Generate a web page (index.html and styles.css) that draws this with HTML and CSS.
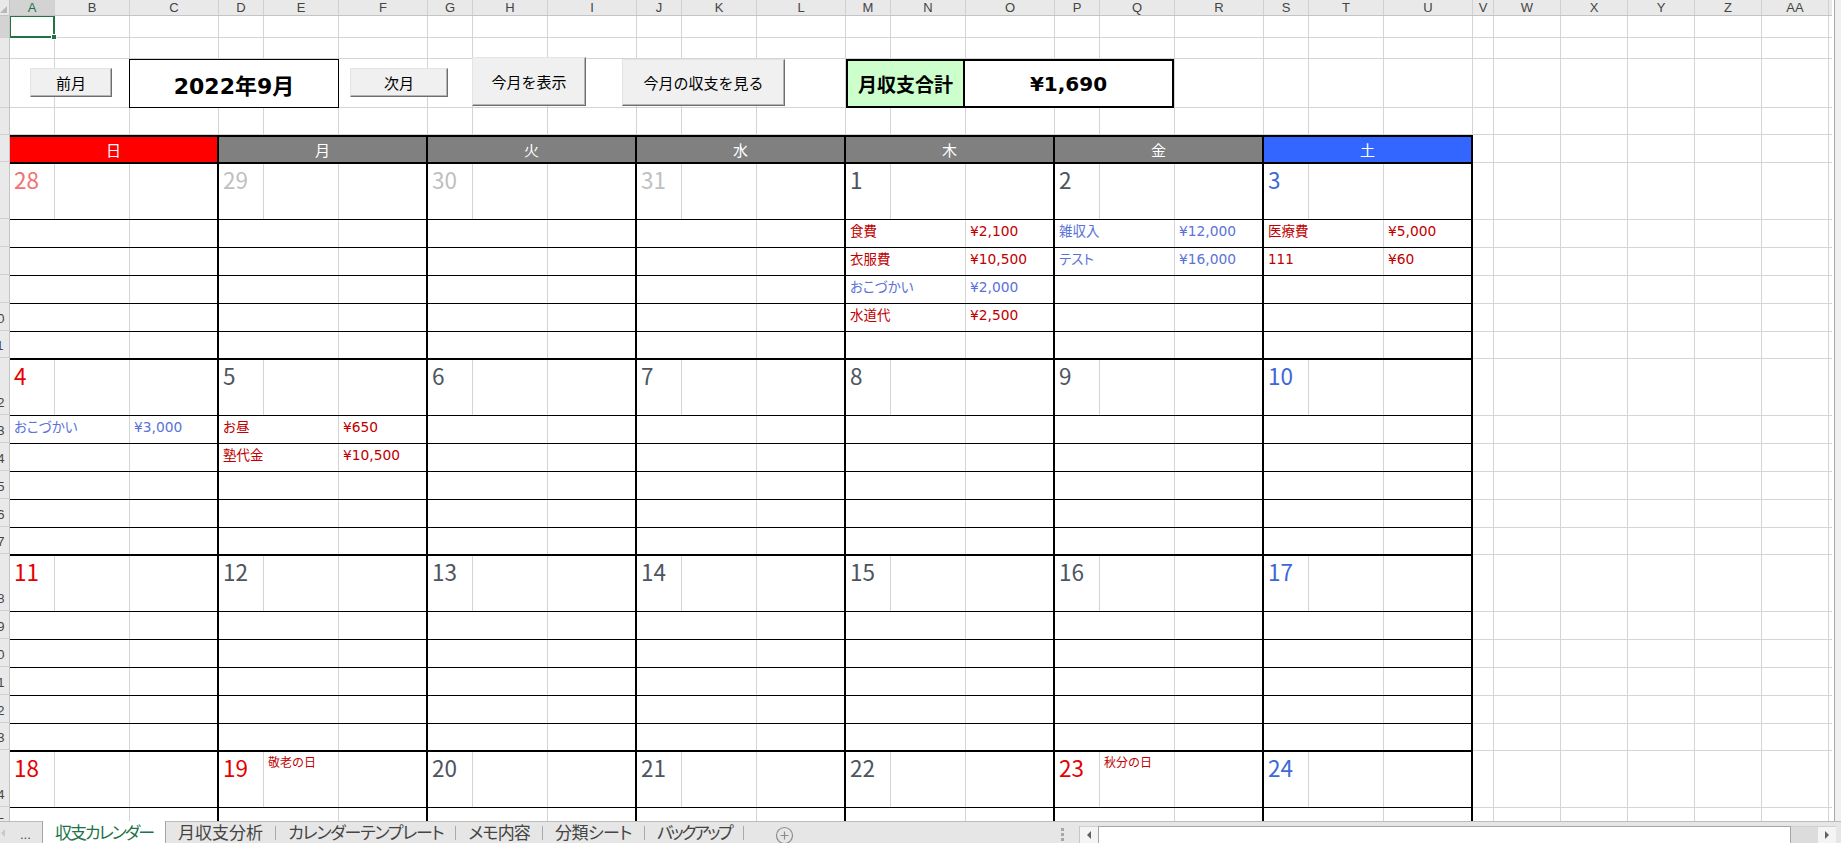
FILE: index.html
```html
<!DOCTYPE html>
<html lang="ja">
<head>
<meta charset="utf-8">
<title>収支カレンダー</title>
<link rel="stylesheet" href="styles.css">
</head>
<body>
<div class="app">
  <div class="workspace">
    <div class="sheet">
      <div class="colhdr">
        <div class="corner"><i class="tri"></i></div>
        <span class="ch ca sel">A</span><span class="ch cb">B</span><span class="ch cc">C</span>
        <span class="ch ca">D</span><span class="ch cb">E</span><span class="ch cc">F</span>
        <span class="ch ca">G</span><span class="ch cb">H</span><span class="ch cc">I</span>
        <span class="ch ca">J</span><span class="ch cb">K</span><span class="ch cc">L</span>
        <span class="ch ca">M</span><span class="ch cb">N</span><span class="ch cc">O</span>
        <span class="ch ca">P</span><span class="ch cb">Q</span><span class="ch cc">R</span>
        <span class="ch ca">S</span><span class="ch cb">T</span><span class="ch cc">U</span>
        <span class="ch cv">V</span><span class="ch cn">W</span><span class="ch cn">X</span><span class="ch cn">Y</span><span class="ch cn">Z</span><span class="ch cn">AA</span>
        <span class="ch crest"></span>
      </div>
      <div class="body">
        <div class="rowhdr">
          <div class="rh h22 sel"><span>1</span></div>
          <div class="rh h21"><span>2</span></div>
          <div class="rh h49"><span>3</span></div>
          <div class="rh h27"><span>4</span></div>
          <div class="rh h27"><span>5</span></div>
          <div class="rh h57"><span>6</span></div>
          <div class="rh h28"><span>7</span></div>
          <div class="rh h28"><span>8</span></div>
          <div class="rh h28"><span>9</span></div>
          <div class="rh h28"><span>10</span></div>
          <div class="rh h27"><span>11</span></div>
          <div class="rh h57"><span>12</span></div>
          <div class="rh h28"><span>13</span></div>
          <div class="rh h28"><span>14</span></div>
          <div class="rh h28"><span>15</span></div>
          <div class="rh h28"><span>16</span></div>
          <div class="rh h27"><span>17</span></div>
          <div class="rh h57"><span>18</span></div>
          <div class="rh h28"><span>19</span></div>
          <div class="rh h28"><span>20</span></div>
          <div class="rh h28"><span>21</span></div>
          <div class="rh h28"><span>22</span></div>
          <div class="rh h27"><span>23</span></div>
          <div class="rh h57"><span>24</span></div>
          <div class="rh h28"><span>25</span></div>
          <div class="rh h28"><span>26</span></div>
        </div>
        <div class="grid">
          <div class="band r22"></div>
          <div class="band r21"></div>
          <div class="band r49">
            <div class="datebox">2022年9月</div>
            <div class="total"><div class="tl">月収支合計</div><div class="tv">¥1,690</div></div>
          </div>
          <div class="band r27"></div>

          <div class="calhead">
            <div class="heads">
              <div class="dh sun">日</div><div class="dh">月</div><div class="dh">火</div><div class="dh">水</div><div class="dh">木</div><div class="dh">金</div><div class="dh sat">土</div>
            </div>
          </div>

          <div class="weekrow">
            <div class="week">
              <div class="day"><div class="dr"><span class="num psun">28</span></div>
                <div class="it"></div><div class="it"></div><div class="it"></div><div class="it"></div><div class="it"></div></div>
              <div class="day"><div class="dr"><span class="num prev">29</span></div>
                <div class="it"></div><div class="it"></div><div class="it"></div><div class="it"></div><div class="it"></div></div>
              <div class="day"><div class="dr"><span class="num prev">30</span></div>
                <div class="it"></div><div class="it"></div><div class="it"></div><div class="it"></div><div class="it"></div></div>
              <div class="day"><div class="dr"><span class="num prev">31</span></div>
                <div class="it"></div><div class="it"></div><div class="it"></div><div class="it"></div><div class="it"></div></div>
              <div class="day"><div class="dr"><span class="num">1</span></div>
                <div class="it"><span class="lb exp">食費</span><span class="am exp">¥2,100</span></div>
                <div class="it"><span class="lb exp">衣服費</span><span class="am exp">¥10,500</span></div>
                <div class="it"><span class="lb inc">おこづかい</span><span class="am inc">¥2,000</span></div>
                <div class="it"><span class="lb exp">水道代</span><span class="am exp">¥2,500</span></div>
                <div class="it"></div></div>
              <div class="day"><div class="dr"><span class="num">2</span></div>
                <div class="it"><span class="lb inc">雑収入</span><span class="am inc">¥12,000</span></div>
                <div class="it"><span class="lb inc">テスト</span><span class="am inc">¥16,000</span></div>
                <div class="it"></div><div class="it"></div><div class="it"></div></div>
              <div class="day"><div class="dr"><span class="num sat">3</span></div>
                <div class="it"><span class="lb exp">医療費</span><span class="am exp">¥5,000</span></div>
                <div class="it"><span class="lb exp">111</span><span class="am exp">¥60</span></div>
                <div class="it"></div><div class="it"></div><div class="it"></div></div>
            </div>
            <div class="restw"></div>
          </div>

          <div class="weekrow">
            <div class="week">
              <div class="day"><div class="dr"><span class="num sun">4</span></div>
                <div class="it"><span class="lb inc">おこづかい</span><span class="am inc">¥3,000</span></div>
                <div class="it"></div><div class="it"></div><div class="it"></div><div class="it"></div></div>
              <div class="day"><div class="dr"><span class="num">5</span></div>
                <div class="it"><span class="lb exp">お昼</span><span class="am exp">¥650</span></div>
                <div class="it"><span class="lb exp">塾代金</span><span class="am exp">¥10,500</span></div>
                <div class="it"></div><div class="it"></div><div class="it"></div></div>
              <div class="day"><div class="dr"><span class="num">6</span></div>
                <div class="it"></div><div class="it"></div><div class="it"></div><div class="it"></div><div class="it"></div></div>
              <div class="day"><div class="dr"><span class="num">7</span></div>
                <div class="it"></div><div class="it"></div><div class="it"></div><div class="it"></div><div class="it"></div></div>
              <div class="day"><div class="dr"><span class="num">8</span></div>
                <div class="it"></div><div class="it"></div><div class="it"></div><div class="it"></div><div class="it"></div></div>
              <div class="day"><div class="dr"><span class="num">9</span></div>
                <div class="it"></div><div class="it"></div><div class="it"></div><div class="it"></div><div class="it"></div></div>
              <div class="day"><div class="dr"><span class="num sat">10</span></div>
                <div class="it"></div><div class="it"></div><div class="it"></div><div class="it"></div><div class="it"></div></div>
            </div>
            <div class="restw"></div>
          </div>

          <div class="weekrow">
            <div class="week">
              <div class="day"><div class="dr"><span class="num sun">11</span></div>
                <div class="it"></div><div class="it"></div><div class="it"></div><div class="it"></div><div class="it"></div></div>
              <div class="day"><div class="dr"><span class="num">12</span></div>
                <div class="it"></div><div class="it"></div><div class="it"></div><div class="it"></div><div class="it"></div></div>
              <div class="day"><div class="dr"><span class="num">13</span></div>
                <div class="it"></div><div class="it"></div><div class="it"></div><div class="it"></div><div class="it"></div></div>
              <div class="day"><div class="dr"><span class="num">14</span></div>
                <div class="it"></div><div class="it"></div><div class="it"></div><div class="it"></div><div class="it"></div></div>
              <div class="day"><div class="dr"><span class="num">15</span></div>
                <div class="it"></div><div class="it"></div><div class="it"></div><div class="it"></div><div class="it"></div></div>
              <div class="day"><div class="dr"><span class="num">16</span></div>
                <div class="it"></div><div class="it"></div><div class="it"></div><div class="it"></div><div class="it"></div></div>
              <div class="day"><div class="dr"><span class="num sat">17</span></div>
                <div class="it"></div><div class="it"></div><div class="it"></div><div class="it"></div><div class="it"></div></div>
            </div>
            <div class="restw"></div>
          </div>

          <div class="weekrow">
            <div class="week">
              <div class="day"><div class="dr"><span class="num sun">18</span></div>
                <div class="it"></div><div class="it"></div><div class="it"></div><div class="it"></div><div class="it"></div></div>
              <div class="day"><div class="dr"><span class="num sun">19</span><span class="hol">敬老の日</span></div>
                <div class="it"></div><div class="it"></div><div class="it"></div><div class="it"></div><div class="it"></div></div>
              <div class="day"><div class="dr"><span class="num">20</span></div>
                <div class="it"></div><div class="it"></div><div class="it"></div><div class="it"></div><div class="it"></div></div>
              <div class="day"><div class="dr"><span class="num">21</span></div>
                <div class="it"></div><div class="it"></div><div class="it"></div><div class="it"></div><div class="it"></div></div>
              <div class="day"><div class="dr"><span class="num">22</span></div>
                <div class="it"></div><div class="it"></div><div class="it"></div><div class="it"></div><div class="it"></div></div>
              <div class="day"><div class="dr"><span class="num sun">23</span><span class="hol">秋分の日</span></div>
                <div class="it"></div><div class="it"></div><div class="it"></div><div class="it"></div><div class="it"></div></div>
              <div class="day"><div class="dr"><span class="num sat">24</span></div>
                <div class="it"></div><div class="it"></div><div class="it"></div><div class="it"></div><div class="it"></div></div>
            </div>
            <div class="restw"></div>
          </div>

          <div class="selcell"><i></i></div>
          <button class="btn b-prev" type="button">前月</button>
          <button class="btn b-next" type="button">次月</button>
          <button class="btn b-today" type="button">今月を表示</button>
          <button class="btn b-view" type="button">今月の収支を見る</button>
        </div>
      </div>
    </div>
    <div class="vscroll"></div>
  </div>

  <div class="tabbar">
    <div class="tabnav">
      <svg class="larr" width="6" height="10" viewBox="0 0 6 10"><path d="M5 1 L1 5 L5 9 Z" fill="#c8c8c8"/></svg>
      <span class="more">...</span>
    </div>
    <div class="tab active k2">収支カレンダー</div>
    <div class="tab">月収支分析</div><span class="sep"></span>
    <div class="tab k12">カレンダーテンプレート</div><span class="sep"></span>
    <div class="tab k09">メモ内容</div><span class="sep"></span>
    <div class="tab k05">分類シート</div><span class="sep"></span>
    <div class="tab k26">バックアップ</div><span class="sep"></span>
    <div class="addsheet">
      <svg width="19" height="19" viewBox="0 0 19 19"><circle cx="9.5" cy="9.5" r="8" fill="none" stroke="#8c8c8c" stroke-width="1.2"/><path d="M9.5 5.5 V13.5 M5.5 9.5 H13.5" stroke="#8c8c8c" stroke-width="1.2"/></svg>
    </div>
    <div class="tabfill"></div>
    <div class="grip"><i></i><i></i><i></i></div>
    <div class="hscroll">
      <div class="harr"><svg width="6" height="10" viewBox="0 0 6 10"><path d="M5 1 L1 5 L5 9 Z" fill="#606060"/></svg></div>
      <div class="thumb"></div>
      <div class="track"></div>
      <div class="harr"><svg width="6" height="10" viewBox="0 0 6 10"><path d="M1 1 L5 5 L1 9 Z" fill="#606060"/></svg></div>
    </div>
  </div>
</div>
</body>
</html>
```

FILE: styles.css
```css
* { box-sizing: border-box; margin: 0; padding: 0; }
html, body { width: 1841px; height: 843px; overflow: hidden; background: #fff; }
body { font-family: "Noto Sans CJK JP", "Noto Sans", sans-serif; color: #000; }

.app { display: flex; flex-direction: column; width: 1841px; height: 843px; }
.workspace { display: flex; height: 821px; flex: none; }
.sheet { flex: 1; display: flex; flex-direction: column; min-width: 0; overflow: hidden; }
.vscroll {
  width: 9px; flex: none;
  background: linear-gradient(to right, #fff 0 2px, #a9a9a9 2px 3px, #f0f0f0 3px);
}

/* column header */
.colhdr { display: flex; height: 16px; flex: none; background: #e9e9e9; border-bottom: 1px solid #c4c4c4; }
.corner { width: 10px; flex: none; position: relative; overflow: hidden; border-right: 1px solid #c4c4c4; }
.tri { position: absolute; left: 0; bottom: 2px; width: 0; height: 0; border-left: 7px solid transparent; border-bottom: 7px solid #b9b9b9; }
.ch {
  flex: none; height: 15px; border-right: 1px solid #d0d0d0;
  font: 13px/15px "Liberation Sans", Arial, sans-serif; color: #444; text-align: center;
}
.ch.sel { background: #d3d3d3; color: #217346; }
.ca { width: 45px; }
.cb { width: 75px; }
.cc { width: 89px; }
.cv { width: 21px; }
.cn { width: 67px; }
.crest { flex: 1; border-right: none; }

/* body */
.body { flex: 1; display: flex; min-height: 0; }
.rowhdr {
  width: 10px; flex: none; overflow: hidden; display: flex; flex-direction: column;
  background: #e9e9e9; border-right: 1px solid #c4c4c4;
}
.rh {
  flex: none; display: flex; align-items: flex-end; padding-bottom: 3px;
  border-bottom: 1px solid #d0d0d0;
  font: 13px/16px "Liberation Sans", Arial, sans-serif; color: #444; white-space: nowrap;
}
.rh span { margin-left: -10px; }
.rh.sel { background: #d3d3d3; }
.h21 { height: 21px; } .h22 { height: 22px; } .h27 { height: 27px; }
.h28 { height: 28px; } .h49 { height: 49px; } .h57 { height: 57px; }

.grid {
  flex: 1; position: relative; overflow: hidden; display: flex; flex-direction: column;
  background:
    linear-gradient(#d4d4d4, #d4d4d4) 1483px 0 / 1px 100% no-repeat,
    linear-gradient(#d4d4d4, #d4d4d4) 1550px 0 / 1px 100% no-repeat,
    linear-gradient(#d4d4d4, #d4d4d4) 1617px 0 / 1px 100% no-repeat,
    linear-gradient(#d4d4d4, #d4d4d4) 1684px 0 / 1px 100% no-repeat,
    linear-gradient(#d4d4d4, #d4d4d4) 1751px 0 / 1px 100% no-repeat,
    linear-gradient(#d4d4d4, #d4d4d4) 1818px 0 / 1px 100% no-repeat,
    linear-gradient(#fff, #fff) 1463px 0 / 600px 100% no-repeat,
    linear-gradient(to right, transparent 0 44px, #d4d4d4 44px 45px, transparent 45px 119px, #d4d4d4 119px 120px, transparent 120px 208px, #d4d4d4 208px 209px) 0 0 / 209px 100% repeat-x,
    #fff;
}

.band { flex: none; display: flex; align-items: flex-start; border-bottom: 1px solid #d4d4d4; }
.r22 { height: 22px; } .r21 { height: 21px; } .r49 { height: 49px; } .r27 { height: 27px; }

.datebox {
  flex: none; margin-left: 119px; width: 210px; height: 49px;
  border: 1px solid #000; background: #fff;
  display: flex; align-items: center; justify-content: center;
  font: 700 22px "DejaVu Sans", "Noto Sans CJK JP", sans-serif; color: #000;
}
.total {
  flex: none; margin-left: 507px; width: 328px; height: 49px;
  border: 2px solid #000; display: flex;
}
.tl {
  width: 117px; flex: none; background: #ccffcc; border-right: 2px solid #000;
  display: flex; align-items: center; justify-content: center;
  font: 700 19px "Noto Sans CJK JP", sans-serif;
}
.tv {
  flex: 1; background: #fff; display: flex; align-items: center; justify-content: center;
  font: 700 20px "DejaVu Sans", "Noto Sans CJK JP", sans-serif;
}

/* calendar */
.calhead { flex: none; height: 27px; display: flex; }
.heads { width: 1463px; flex: none; display: flex; border-top: 2px solid #000; }
.dh {
  width: 209px; flex: none; border-right: 2px solid #000; background: #808080; color: #fff;
  display: flex; align-items: center; justify-content: center; font-size: 15px; line-height: 20px;
}
.dh.sun { background: #ff0000; }
.dh.sat { background: #3366ff; }

.weekrow { flex: none; height: 196px; display: flex; }
.week { width: 1463px; flex: none; display: flex; border-top: 2px solid #000; }
.day { width: 209px; flex: none; display: flex; flex-direction: column; border-right: 2px solid #000; }
.dr { height: 55px; flex: none; display: flex; align-items: flex-start; }
.num { width: 45px; flex: none; padding: 3px 0 0 4px; font-size: 22.5px; line-height: 24px; color: #4d5560; }
.num.prev { color: #bfbfbf; }
.num.psun { color: #f07272; }
.num.sun { color: #e60000; }
.num.sat { color: #3c68d8; }
.hol { padding: 3px 0 0 4px; font-size: 12px; line-height: 14px; color: #c00000; white-space: nowrap; }

.it {
  height: 28px; flex: none; display: flex; align-items: center; padding-bottom: 5px;
  border-top: 1px solid #000;
  background: linear-gradient(#d4d4d4, #d4d4d4) 119px 0 / 1px 100% no-repeat, #fff;
}
.it:last-child { height: 27px; }
.lb {
  width: 119px; flex: none; padding-left: 4px; white-space: nowrap;
  font: 13.5px/16px "DejaVu Sans", "Noto Sans CJK JP", sans-serif; font-feature-settings: "palt";
}
.am { padding-left: 5px; white-space: nowrap; font: 13.8px/16px "DejaVu Sans", "Noto Sans CJK JP", sans-serif; }
.exp { color: #c00000; }
.inc { color: #5b73d8; }

.restw {
  flex: 1;
  background:
    linear-gradient(#d4d4d4, #d4d4d4) 0 0 / 100% 1px no-repeat,
    repeating-linear-gradient(to bottom, #d4d4d4 0 1px, transparent 1px 28px) 0 57px / 100% 140px no-repeat;
}

/* overlays */
.selcell { position: absolute; left: -1px; top: -1px; width: 46px; height: 23px; border: 2px solid #217346; }
.selcell i { position: absolute; right: -4px; bottom: -4px; width: 6px; height: 6px; background: #217346; border: 1px solid #fff; }

.btn {
  position: absolute; padding: 0; cursor: default;
  background: #f0f0f0;
  border-top: 1px solid #e4e4e4; border-left: 1px solid #e4e4e4;
  border-right: 1px solid #6e6e6e; border-bottom: 1px solid #6e6e6e;
  box-shadow: inset -1px -1px 0 #b4b4b4;
  font: 15px/20px "Noto Sans CJK JP", sans-serif; color: #000;
  display: flex; align-items: center; justify-content: center;
}
.b-prev { left: 20px; top: 52px; width: 82px; height: 29px; }
.b-next { left: 340px; top: 52px; width: 98px; height: 29px; }
.b-today { left: 462px; top: 41px; width: 114px; height: 49px; }
.b-view { left: 612px; top: 43px; width: 163px; height: 47px; }

/* sheet tabs */
.tabbar {
  flex: none; height: 22px; display: flex; align-items: flex-start;
  background: #e6e6e6; border-top: 1px solid #bcbcbc; overflow: visible;
}
.tabnav { width: 42px; flex: none; height: 21px; display: flex; align-items: center; }
.larr { margin-left: 0; flex: none; }
.more { margin-left: 14px; font: 13px/16px "Liberation Sans", Arial, sans-serif; color: #444; padding-top: 4px; }
.tab {
  flex: none; height: 21px; padding: 0 12px; white-space: nowrap;
  font-size: 17px; line-height: 19px; color: #444; font-feature-settings: "palt";
}
.tab.k05 { letter-spacing: -0.5px; }
.tab.k09 { letter-spacing: -0.9px; }
.tab.k12 { letter-spacing: -1.2px; }
.tab.k2 { letter-spacing: -2px; }
.tab.k26 { letter-spacing: -2.6px; }
.tab.active {
  background: #fff; color: #217346; margin-top: -1px; height: 22px; padding-top: 1px;
  border-left: 1px solid #a6a6a6; border-right: 1px solid #a6a6a6;
}
.sep { flex: none; width: 1px; height: 14px; margin-top: 4px; background: #a9a9a9; }
.addsheet { flex: none; margin: 4px 0 0 31px; height: 18px; overflow: visible; }
.addsheet svg { display: block; }
.tabfill { flex: 1; }
.grip { flex: none; width: 3px; margin-top: 6px; display: flex; flex-direction: column; gap: 2px; }
.grip i { display: block; width: 3px; height: 3px; background: #a6a6a6; }
.hscroll {
  flex: none; width: 757px; height: 17px; margin: 4px 5px 0 15px; display: flex;
  background: #dedede; border-left: 1px solid #c6c6c6;
}
.harr { width: 18px; flex: none; display: flex; align-items: center; justify-content: center; background: #f4f4f4; border-top: 1px solid #d0d0d0; }
.thumb { width: 693px; flex: none; background: #fff; border: 1px solid #a6a6a6; border-bottom: none; }
.track { flex: 1; background: #dcdcdc; border-top: 1px solid #d0d0d0; }
```
